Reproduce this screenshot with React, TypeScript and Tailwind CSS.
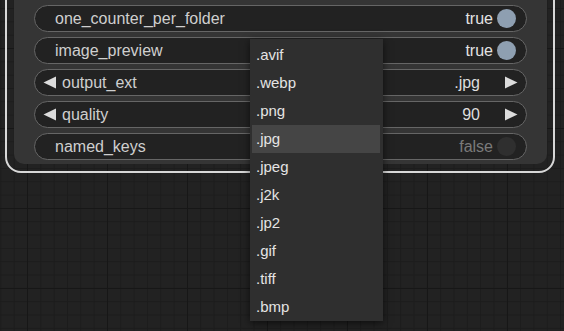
import React from "react";

type Row =
  | { kind: "toggle"; label: string; on: boolean }
  | { kind: "combo"; label: string; value: string };

const rows: Row[] = [
  { kind: "toggle", label: "one_counter_per_folder", on: true },
  { kind: "toggle", label: "image_preview", on: true },
  { kind: "combo", label: "output_ext", value: ".jpg" },
  { kind: "combo", label: "quality", value: "90" },
  { kind: "toggle", label: "named_keys", on: false },
];

const options = [".avif", ".webp", ".png", ".jpg", ".jpeg", ".j2k", ".jp2", ".gif", ".tiff", ".bmp"];

const Arrow = ({ dir }: { dir: "left" | "right" }) => (
  <svg width="13" height="13" viewBox="0 0 13 13" className="shrink-0">
    {dir === "left" ? (
      <polygon points="13,0.5 13,12.5 0.5,6.5" fill="#dcdcdc" />
    ) : (
      <polygon points="0,0.5 0,12.5 12.5,6.5" fill="#dcdcdc" />
    )}
  </svg>
);

const Widget = ({ row }: { row: Row }) => {
  if (row.kind === "combo") {
    return (
      <div className="flex h-[27px] items-center rounded-full border border-[#666] bg-[#222] pl-[8px] pr-[8px]">
        <Arrow dir="left" />
        <span className="ml-[6px] text-[#cfcfcf]">{row.label}</span>
        <span className="ml-auto text-[#dedede]">{row.value}</span>
        <span className="ml-[25px] flex">
          <Arrow dir="right" />
        </span>
      </div>
    );
  }
  return (
    <div className="flex h-[27px] items-center rounded-full border border-[#666] bg-[#222] pl-[20px] pr-[10px]">
      <span className="text-[#cfcfcf]">{row.label}</span>
      <span className={"ml-auto " + (row.on ? "text-[#e2e2e2]" : "text-[#7a7a7a]")}>
        {row.on ? "true" : "false"}
      </span>
      <span
        className={
          "ml-[4px] h-[19px] w-[19px] rounded-full " + (row.on ? "bg-[#8e9fb1]" : "bg-[#2f2f2f]")
        }
      />
    </div>
  );
};

export default function App() {
  return (
    <div className="relative h-[331px] w-[564px] overflow-hidden bg-[#222222] font-['Liberation_Sans',Arial,sans-serif] text-[16px] [background-image:linear-gradient(to_right,#171717_1px,transparent_1px),linear-gradient(to_bottom,#171717_1px,transparent_1px),linear-gradient(to_right,#1c1c1c_1px,transparent_1px),linear-gradient(to_bottom,#1c1c1c_1px,transparent_1px)] [background-size:80px_80px,80px_80px,13.333px_13.333px,13.333px_13.333px] [background-position:27px_0,0_48px,0.33px_0,0_8px]">
      {/* selected node outline */}
      <div className="ml-[5px] mt-[-40px] w-[550px] rounded-[16px] border-2 border-[#d8d8d8] pb-[7px] pl-[7px] pr-[6px] pt-[6px]">
        <div className="flex flex-col gap-[5px] rounded-[10px] bg-[#353535] pb-[4px] pl-[20px] pr-[20px] pt-[5px]">
          <div className="h-[27px] rounded-full border border-[#666] bg-[#222]" />
          {rows.map((r) => (
            <Widget key={r.label} row={r} />
          ))}
        </div>
      </div>

      {/* combo dropdown */}
      <div className="absolute left-[250px] top-[39px] w-[133px] bg-[#2f2f2f] pb-[0px] pl-[2px] pr-[3px] pt-[2px] text-[15px] text-[#e4e4e4] shadow-[0_2px_8px_rgba(0,0,0,0.6)]">
        {options.map((o) => (
          <div
            key={o}
            className={"flex h-[28px] items-center pl-[4px] " + (o === ".jpg" ? "bg-[#454545]" : "")}
          >
            {o}
          </div>
        ))}
      </div>
    </div>
  );
}
